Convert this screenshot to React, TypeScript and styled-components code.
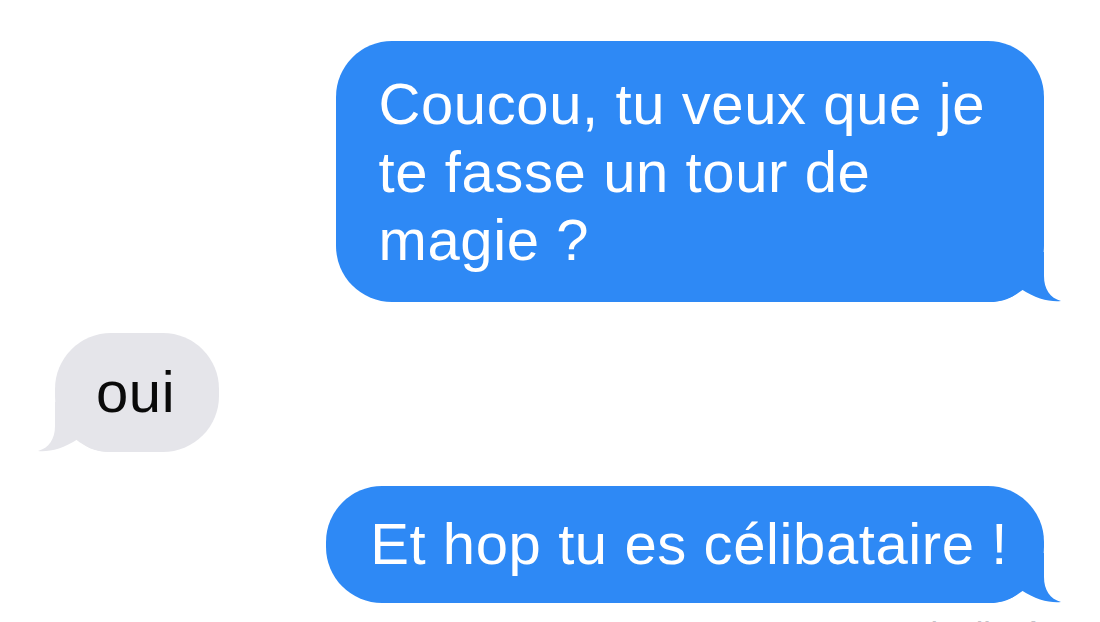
import styled, { createGlobalStyle } from 'styled-components';

const GlobalStyle = createGlobalStyle`
  html, body {
    margin: 0;
    padding: 0;
    background: #ffffff;
    overflow: hidden;
  }
  body {
    font-family: "Liberation Sans", Arial, sans-serif;
  }
`;

type Side = 'left' | 'right';

const BLUE = '#2e89f5';
const GRAY = '#e5e5ea';

const Thread = styled.div`
  width: 1100px;
  height: 622px;
  overflow: hidden;
  box-sizing: border-box;
  display: flex;
  flex-direction: column;
  padding: 41px 56px 0 55px;
`;

const Row = styled.div<{ $side: Side; $top: number }>`
  display: flex;
  justify-content: ${({ $side }) => ($side === 'right' ? 'flex-end' : 'flex-start')};
  margin-top: ${({ $top }) => $top}px;
`;

const Bubble = styled.div<{ $side: Side; $pad: string }>`
  position: relative;
  background: ${({ $side }) => ($side === 'right' ? BLUE : GRAY)};
  color: ${({ $side }) => ($side === 'right' ? '#ffffff' : '#0a0a0a')};
  border-radius: 56px;
  padding: ${({ $pad }) => $pad};
  font-size: 58px;
  line-height: 68px;
  letter-spacing: 0.6px;
  white-space: nowrap;
`;

// text sits above the tail drawing
const BubbleText = styled.span`
  position: relative;
  z-index: 1;
`;

// the little curled tail at the bottom corner of a bubble
const TailSvg = styled.svg<{ $side: Side }>`
  position: absolute;
  bottom: 0;
  width: 74px;
  height: 50px;
  ${({ $side }) => ($side === 'right' ? 'right: -18px;' : 'left: -18px; transform: scaleX(-1);')}
`;

const Tail = ({ side }: { side: Side }) => (
  <TailSvg $side={side} viewBox="0 0 74 50">
    <path
      d="M0 0 L56 0 L56 24 C56 37 62 46 73 49 C62 50 48 47 33 37 C27 44 18 50 0 50 Z"
      fill={side === 'right' ? BLUE : GRAY}
    />
  </TailSvg>
);

const Status = styled.div`
  font-size: 34px;
  line-height: 40px;
  color: #c4c4c9;
  padding-right: 4px;
`;

const App = () => {
  return (
    <>
      <GlobalStyle />
      <Thread>
        <Row $side="right" $top={0}>
          <Bubble $side="right" $pad="29px 59px 28px 43px">
            <Tail side="right" />
            <BubbleText>
              Coucou, tu veux que je
              <br />
              te fasse un tour de
              <br />
              magie ?
            </BubbleText>
          </Bubble>
        </Row>
        <Row $side="left" $top={31}>
          <Bubble $side="left" $pad="25px 44px 26px 41px">
            <Tail side="left" />
            <BubbleText>oui</BubbleText>
          </Bubble>
        </Row>
        <Row $side="right" $top={34}>
          <Bubble $side="right" $pad="24px 36px 25px 44px">
            <Tail side="right" />
            <BubbleText>Et hop tu es célibataire !</BubbleText>
          </Bubble>
        </Row>
        <Row $side="right" $top={10}>
          <Status>Distribué</Status>
        </Row>
      </Thread>
    </>
  );
};

export default App;
